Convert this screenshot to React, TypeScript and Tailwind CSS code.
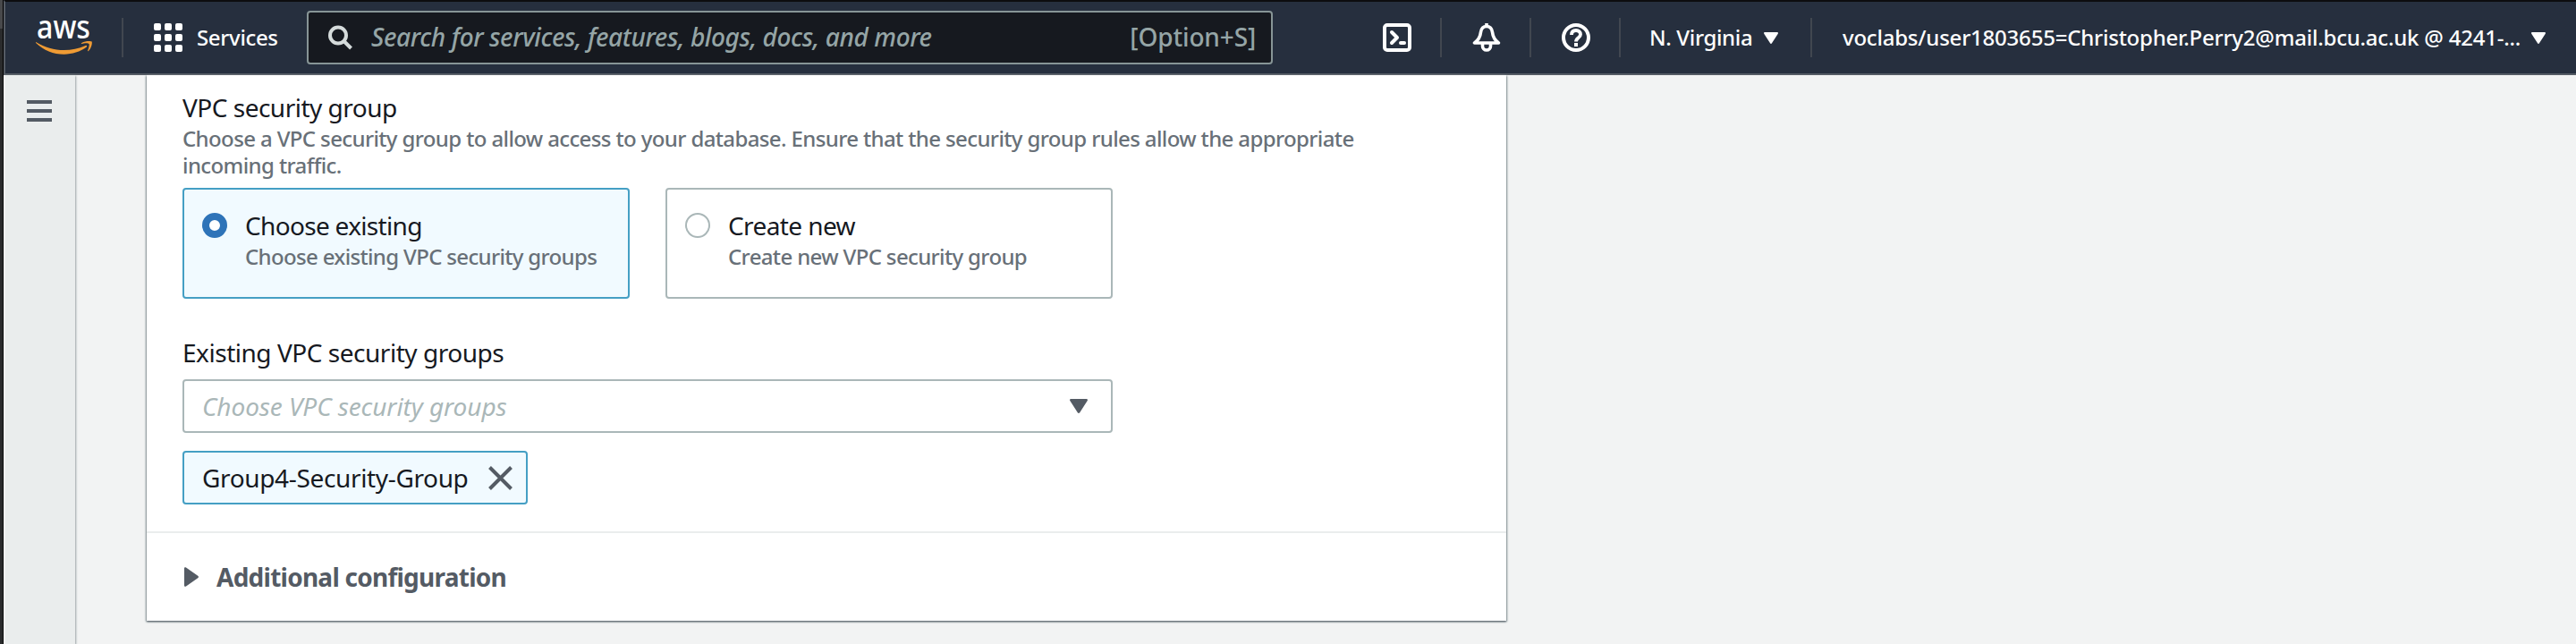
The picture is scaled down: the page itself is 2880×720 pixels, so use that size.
import React from "react";

type IconProps = { className?: string };

function AwsLogo() {
  return (
    <svg className="h-[46px] w-16 overflow-visible" viewBox="0 0 64 46">
      <text x="1" y="24" fontFamily="Noto Sans, sans-serif" fontSize="36" fontWeight="500" fill="#fff" textLength="60" lengthAdjust="spacingAndGlyphs">aws</text>
      <g transform="translate(0 3)" fill="#ef9b34">
        <path d="M0.6 25.2c9.200 5.600 20 8.800 31 8.800 8.200 0 16.400-1.700 24-5 1.300-.6 2.300.8 1 1.800C50 35.700 40.400 38.700 31.600 38.700 19.800 38.700 8.600 34.300.4 26.200c-.7-.7-.3-1.300.2-1z" />
        <path d="M59.500 27c-1-1.200-5.600-.8-8 0-.8.2-.8-.6-.2-1 3.600-2.500 10.500-2.400 11.300-1.500.8 1-.2 7.500-3.700 10.500-.5.4-1 .1-.8-.4.800-2 2.200-6.400 1.400-7.600z" />
      </g>
    </svg>
  );
}

function GridIcon() {
  return (
    <div className="grid grid-cols-3 gap-1">
      {Array.from({ length: 9 }, (_, i) => (
        <div key={i} className="size-2 rounded-[2px] bg-white" />
      ))}
    </div>
  );
}

function SearchIcon() {
  return (
    <svg className="size-7" viewBox="0 0 28 28" fill="none" stroke="#d5dbdb" strokeWidth="4">
      <circle cx="11" cy="11.500" r="9" />
      <path d="M17.500 18l8 8" />
    </svg>
  );
}

function TerminalIcon() {
  return (
    <svg className="size-8" viewBox="0 0 32 32" fill="none" stroke="#fff" strokeWidth="4" strokeLinejoin="round" strokeLinecap="round">
      <rect x="2" y="2" width="28" height="28" rx="3" />
      <path d="M10 10l6 6-6 6" />
      <path d="M20 22h4" />
    </svg>
  );
}

function BellIcon() {
  return (
    <svg className="size-8" viewBox="0 0 32 32" fill="none" stroke="#fff" strokeWidth="3.6" strokeLinejoin="round">
      <path d="M16 3.500c-4 0-6 3-6.500 6.500C9 15 7.500 18.500 2.500 22h27c-5-3.500-6.500-7-7-12C22 6.500 20 3.500 16 3.500z" />
      <path d="M16 0v4" />
      <path d="M11.500 22v3.500a4.500 4.500 0 0 0 9 0V22" />
    </svg>
  );
}

function HelpIcon() {
  return (
    <svg className="size-8" viewBox="0 0 32 32" fill="none" stroke="#fff" strokeWidth="4">
      <circle cx="16" cy="16" r="14" />
      <path d="M11 13c0-3.500 2-5 5-5s5 1.800 5 4.500c0 4-5 3.500-5 8" strokeWidth="3.800" />
      <path d="M16 22v4" />
    </svg>
  );
}

function DownCaret({ className }: IconProps) {
  return (
    <svg className={className} viewBox="0 0 20 16" preserveAspectRatio="none" fill="currentColor">
      <path d="M1.500 0h17c1.200 0 1.800 1 1.200 2L11.200 15.200c-.6 1-1.800 1-2.400 0L.3 2C-.3 1 .3 0 1.500 0z" />
    </svg>
  );
}

function Divider() {
  return <div className="h-11 w-0.5 shrink-0 bg-[#414750]" />;
}

function Header() {
  return (
    <header className="flex h-[84px] shrink-0 items-start border-t-2 border-b-2 border-l-2 border-t-[#0d0d0f] border-b-[#545b64] border-l-[#545b64] bg-[#262f3e] text-2xl font-medium text-white">
      <div className="flex h-20 w-full items-center">
        <div className="ml-[34px] w-16"><AwsLogo /></div>
        <div className="ml-8"><Divider /></div>
        <div className="ml-[34px]"><GridIcon /></div>
        <div className="ml-4 w-[123px] tracking-[-0.35px]">Services</div>
        <div className="flex h-[60px] w-[1080px] shrink-0 items-center rounded-[4px] border-2 border-[#879596] bg-[#16191f] pr-[17px] pl-[22px] text-[28px] text-[#95a5a6]">
          <SearchIcon />
          <span className="ml-5 flex-1 tracking-[-0.38px] whitespace-nowrap italic">Search for services, features, blogs, docs, and more</span>
          <span className="tracking-[-0.15px]">[Option+S]</span>
        </div>
        <div className="ml-[123px]"><TerminalIcon /></div>
        <div className="ml-8"><Divider /></div>
        <div className="ml-[34px]"><BellIcon /></div>
        <div className="ml-8"><Divider /></div>
        <div className="ml-[34px]"><HelpIcon /></div>
        <div className="ml-8"><Divider /></div>
        <div className="ml-8 w-[128px] tracking-[-0.35px] whitespace-nowrap">N. Virginia</div>
        <DownCaret className="h-[13px] w-4 shrink-0" />
        <div className="ml-9"><Divider /></div>
        <div className="ml-[34px] w-[770px] shrink-0 tracking-[-0.22px] whitespace-nowrap">voclabs/user1803655=Christopher.Perry2@mail.bcu.ac.uk @ 4241-...</div>
        <DownCaret className="h-[13px] w-4 shrink-0" />
      </div>
    </header>
  );
}

function Sidebar() {
  return (
    <aside className="flex w-20 shrink-0 flex-col items-start gap-1.5 border-l-2 border-[#f2f3f3] bg-[#eaeded] pt-7 pl-6 shadow-[1px_1px_2px_#9aa3a6]">
      <div className="h-1 w-7 bg-[#545b64]" />
      <div className="h-1 w-7 bg-[#545b64]" />
      <div className="h-1 w-7 bg-[#545b64]" />
    </aside>
  );
}

function Tile({ title, text, selected, titleClass, textClass }: { title: string; text: string; selected?: boolean; titleClass: string; textClass: string }) {
  return (
    <div className={selected
      ? "flex h-[124px] w-[500px] rounded-[4px] border-2 border-[#459fc4] bg-[#f1faff] pt-[22px] pl-5"
      : "flex h-[124px] w-[500px] rounded-[4px] border-2 border-[#aab7b8] bg-white pt-[22px] pl-5"}>
      <div className={selected
        ? "mt-1 size-7 rounded-full border-[8.500px] border-[#2e73b8] bg-white"
        : "mt-1 size-7 rounded-full border-2 border-[#aab7b8] bg-white"} />
      <div className="-mt-0.5 ml-5">
        <div className={titleClass}>{title}</div>
        <div className={textClass}>{text}</div>
      </div>
    </div>
  );
}

function SecurityGroupForm() {
  return (
    <section className="flex h-[510px] flex-col items-start pt-4 pl-10">
      <h2 className="text-[28px] leading-10 tracking-[-0.5px] text-[#16191f]">VPC security group</h2>
      <p className="text-2xl leading-[30px] font-medium text-[#687078]">
        <span className="block tracking-[-0.62px]">Choose a VPC security group to allow access to your database. Ensure that the security group rules allow the appropriate</span>
        <span className="block tracking-[-0.6px]">incoming traffic.</span>
      </p>
      <div className="mt-2.5 flex gap-10">
        <Tile selected title="Choose existing" text="Choose existing VPC security groups"
          titleClass="text-[28px] leading-10 tracking-[-0.68px] text-[#16191f]"
          textClass="text-2xl leading-[30px] font-medium tracking-[-0.66px] text-[#687078]" />
        <Tile title="Create new" text="Create new VPC security group"
          titleClass="text-[28px] leading-10 tracking-[-0.6px] text-[#16191f]"
          textClass="text-2xl leading-[30px] font-medium tracking-[-0.64px] text-[#687078]" />
      </div>
      <h3 className="mt-10 text-[28px] leading-10 tracking-[-0.47px] text-[#16191f]">Existing VPC security groups</h3>
      <div className="mt-2.5 flex h-[60px] w-[1040px] items-center justify-between rounded-[4px] border-2 border-[#aab7b8] bg-white pr-[26px] pl-5 text-[#545b64]">
        <span className="text-[28px] tracking-[-0.08px] text-[#aab7b8] italic">Choose VPC security groups</span>
        <DownCaret className="h-4 w-5" />
      </div>
      <div className="mt-5 flex h-[60px] w-[386px] items-center justify-between rounded-[4px] border-2 border-[#459fc4] bg-[#f1faff] pr-[15px] pl-5">
        <span className="text-[28px] tracking-[-0.35px] text-[#16191f]">Group4-Security-Group</span>
        <svg className="size-[27px]" viewBox="0 0 27 27" stroke="#545b64" strokeWidth="4">
          <path d="M1.500 1.500l24 24M25.500 1.500l-24 24" />
        </svg>
      </div>
    </section>
  );
}

function Panel() {
  return (
    <main className="ml-20 h-[610px] w-[1520px] bg-white shadow-[0_1px_2px_#545b64,1px_1px_2px_#aab7b8,-1px_1px_2px_#aab7b8]">
      <SecurityGroupForm />
      <div className="flex h-[100px] items-center border-t-2 border-[#eaeded] pl-[42px]">
        <svg className="h-[22px] w-4" viewBox="0 0 16 22" fill="#545b64">
          <path d="M0 1.500C0 .3 1 0 2 .5L15.200 9.800c1 .7 1 1.700 0 2.400L2 21.500c-1 .5-2 .2-2-1z" />
        </svg>
        <span className="ml-5 text-[28px] font-bold tracking-[-0.75px] text-[#545b64]">Additional configuration</span>
      </div>
    </main>
  );
}

export default function App() {
  return (
    <div className="flex h-[720px] w-[2880px] overflow-hidden bg-[#f2f3f3] font-['Noto_Sans',sans-serif]">
      <div className="flex w-1 shrink-0 flex-col border-r border-black bg-[#2a2b2c]">
        <div className="h-8 bg-[#48494b]" />
      </div>
      <div className="flex min-w-0 flex-1 flex-col">
        <Header />
        <div className="flex flex-1">
          <Sidebar />
          <Panel />
        </div>
      </div>
    </div>
  );
}
